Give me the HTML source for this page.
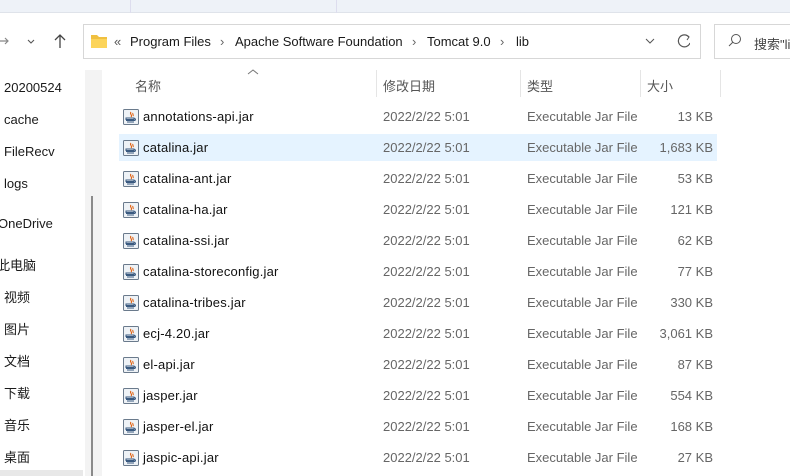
<!DOCTYPE html>
<html><head><meta charset="utf-8"><style>
*{margin:0;padding:0;box-sizing:border-box}
body{width:790px;height:476px;overflow:hidden;background:#fff;position:relative;font-family:"Liberation Sans","Noto Sans CJK SC",sans-serif;font-size:13px;color:#1a1a1a}
.a{position:absolute;white-space:nowrap}
.top{left:0;top:0;width:790px;height:13px;background:#eef2f8;border-bottom:1px solid #dfe3ea}
.addr{left:83px;top:24px;width:618px;height:35px;border:1px solid #d7d7d7;background:#fff}
.search{left:714px;top:24px;width:90px;height:35px;border:1px solid #d7d7d7}
.gut{left:85px;top:70px;width:17px;height:406px;background:#f3f3f3}
.thumb{left:91px;top:196px;width:2px;height:280px;background:#8a8a8a}
.hd{top:76px;color:#555}
.sep{top:70px;width:1px;height:27px;background:#e5e5e5}
.sel{left:119px;top:134px;width:598px;height:27px;background:#e5f3ff}
.g{color:#666}
.n{color:#111;letter-spacing:0.2px}
</style></head><body>
<div class="a top"></div>
<div class="a" style="left:130px;top:0;width:1px;height:13px;background:#dde"></div>
<div class="a" style="left:336px;top:0;width:1px;height:13px;background:#dde"></div>
<svg class="a" style="left:0;top:32px" width="80" height="20">
<path d="M0 9h8M5 6l3 3-3 3" stroke="#888" stroke-width="1.2" fill="none"/>
<path d="M28 8l3 3 3-3" stroke="#555" stroke-width="1.1" fill="none"/>
<path d="M60 16V3M55 8l5-5 5 5" stroke="#444" stroke-width="1.3" fill="none"/>
</svg>
<div class="a addr"></div>
<svg class="a" style="left:90px;top:33px" width="18" height="16"><path d="M1 2h6l2 2h8v11H1z" fill="#f0c040"/><path d="M1 6h16v9H1z" fill="#fcd45a"/></svg>
<div class="a" style="left:114px;top:34px;color:#555">«</div>
<div class="a" style="left:130px;top:34px">Program Files</div>
<div class="a" style="left:220px;top:34px;color:#666">›</div>
<div class="a" style="left:235px;top:34px">Apache Software Foundation</div>
<div class="a" style="left:412px;top:34px;color:#666">›</div>
<div class="a" style="left:427px;top:34px">Tomcat 9.0</div>
<div class="a" style="left:500px;top:34px;color:#666">›</div>
<div class="a" style="left:516px;top:34px">lib</div>
<svg class="a" style="left:640px;top:33px" width="50" height="16"><path d="M6 6l4 4 4-4" stroke="#555" fill="none"/><path d="M49 4A6 6 0 1 0 50 10" stroke="#555" fill="none" stroke-width="1.2"/><path d="M46 2l3 2-2 3" stroke="#555" fill="none"/></svg>
<div class="a search"></div>
<svg class="a" style="left:727px;top:33px" width="16" height="16"><circle cx="9" cy="6" r="4.5" stroke="#555" fill="none"/><path d="M6 9l-4 4" stroke="#555"/></svg>
<div class="a" style="left:754px;top:34px;color:#444">搜索"li</div>

<div class="a" style="left:4px;top:80px">20200524</div>
<div class="a" style="left:4px;top:112px">cache</div>
<div class="a" style="left:4px;top:144px">FileRecv</div>
<div class="a" style="left:4px;top:176px">logs</div>
<div class="a" style="left:-2px;top:216px">OneDrive</div>
<div class="a" style="left:-3px;top:255px">此电脑</div>
<div class="a" style="left:4px;top:287px">视频</div>
<div class="a" style="left:4px;top:319px">图片</div>
<div class="a" style="left:4px;top:351px">文档</div>
<div class="a" style="left:4px;top:383px">下载</div>
<div class="a" style="left:4px;top:415px">音乐</div>
<div class="a" style="left:4px;top:447px">桌面</div>
<div class="a" style="left:0;top:470px;width:83px;height:6px;background:#e8e8e8"></div>
<div class="a gut"></div>
<div class="a thumb"></div>

<svg class="a" style="left:247px;top:68px" width="12" height="8"><path d="M1 6l5-4 5 4" stroke="#777" fill="none"/></svg>
<div class="a hd" style="left:135px">名称</div>
<div class="a sep" style="left:376px"></div>
<div class="a hd" style="left:383px">修改日期</div>
<div class="a sep" style="left:520px"></div>
<div class="a hd" style="left:527px">类型</div>
<div class="a sep" style="left:640px"></div>
<div class="a hd" style="left:647px">大小</div>
<div class="a sep" style="left:720px"></div>
<div class="a sel"></div>
<div id="rows"></div>
<script>
var d=[["annotations-api.jar","13 KB"],["catalina.jar","1,683 KB"],["catalina-ant.jar","53 KB"],["catalina-ha.jar","121 KB"],["catalina-ssi.jar","62 KB"],["catalina-storeconfig.jar","77 KB"],["catalina-tribes.jar","330 KB"],["ecj-4.20.jar","3,061 KB"],["el-api.jar","87 KB"],["jasper.jar","554 KB"],["jasper-el.jar","168 KB"],["jaspic-api.jar","27 KB"]];
var h="";
d.forEach(function(r,i){var y=109+i*31;
h+='<svg class="a" style="left:123px;top:'+y+'px" width="16" height="16"><rect x="0.5" y="0.5" width="15" height="15" rx="1" fill="#eef2f6" stroke="#6a7a8c"/><path d="M8 3c-2 2 2 3 0 5M10 4c-1 1 1 2 0 3" stroke="#e06010" fill="none" stroke-width="1.1"/><path d="M3 9h8v1.5H3zM3 11.5h9M4 13h7" stroke="#3a5a80" fill="none"/><path d="M11 9.5c2 0 2 2 0 2" stroke="#3a5a80" fill="none"/></svg>';
h+='<div class="a n" style="left:143px;top:'+y+'px">'+r[0]+'</div>';
h+='<div class="a g" style="left:383px;top:'+y+'px">2022/2/22 5:01</div>';
h+='<div class="a g" style="left:527px;top:'+y+'px">Executable Jar File</div>';
h+='<div class="a g" style="right:77px;top:'+y+'px">'+r[1]+'</div>';});
document.getElementById("rows").innerHTML=h;
</script>
</body></html>
